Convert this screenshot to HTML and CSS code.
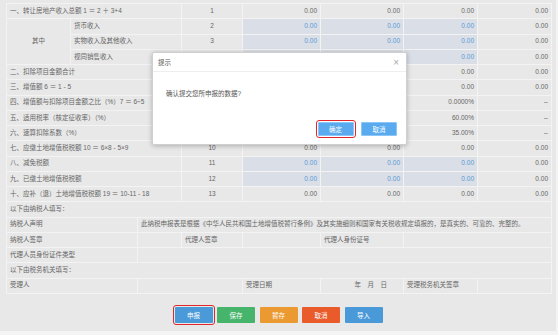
FILE: index.html
```html
<!DOCTYPE html>
<html lang="zh-CN">
<head>
    <meta charset="UTF-8">
    <title>土地增值税申报</title>
    <link rel="stylesheet" href="styles.css">
</head>
<body>
    <div class="page">
        <table class="form">
            <colgroup>
                <col class="c-a"><col class="c-b"><col class="c-c"><col class="c-d">
                <col class="c-e"><col class="c-f"><col class="c-g"><col class="c-h">
            </colgroup>
            <tr><td colspan="3">一、转让房地产收入总额 1 ＝ 2 ＋ 3+4</td><td class="no">1</td><td class="num">0.00</td><td class="num">0.00</td><td class="num">0.00</td><td class="num">0.00</td></tr>
            <tr><td rowspan="3" class="mid">其中</td><td colspan="2">货币收入</td><td class="no">2</td><td class="num in">0.00</td><td class="num in">0.00</td><td class="num in">0.00</td><td class="num">0.00</td></tr>
            <tr><td colspan="2">实物收入及其他收入</td><td class="no">3</td><td class="num in">0.00</td><td class="num in">0.00</td><td class="num in">0.00</td><td class="num">0.00</td></tr>
            <!-- rows under the dialog: hidden cells left empty -->
            <tr><td colspan="2">视同销售收入</td><td class="no"></td><td class="num in"></td><td class="num in"></td><td class="num in">0.00</td><td class="num">0.00</td></tr>
            <tr><td colspan="3">二、扣除项目金额合计</td><td class="no"></td><td class="num"></td><td class="num"></td><td class="num">0.00</td><td class="num">0.00</td></tr>
            <tr><td colspan="3">三、增值额 6 ＝ 1 - 5</td><td class="no"></td><td class="num"></td><td class="num"></td><td class="num">0.00</td><td class="num">0.00</td></tr>
            <tr><td colspan="3">四、增值额与扣除项目金额之比（%）7 ＝ 6÷5</td><td class="no"></td><td class="num"></td><td class="num"></td><td class="num">0.0000%</td><td class="num">--</td></tr>
            <tr><td colspan="3">五、适用税率（核定征收率）（%）</td><td class="no"></td><td class="num"></td><td class="num"></td><td class="num">60.00%</td><td class="num">--</td></tr>
            <tr><td colspan="3">六、速算扣除系数（%）</td><td class="no"></td><td class="num"></td><td class="num"></td><td class="num">35.00%</td><td class="num">--</td></tr>
            <tr><td colspan="3">七、应缴土地增值税税额 10 ＝ 6×8 - 5×9</td><td class="no">10</td><td class="num">0.00</td><td class="num">0.00</td><td class="num">0.00</td><td class="num">0.00</td></tr>
            <tr><td colspan="3">八、减免税额</td><td class="no">11</td><td class="num in">0.00</td><td class="num in">0.00</td><td class="num in">0.00</td><td class="num">0.00</td></tr>
            <tr><td colspan="3">九、已缴土地增值税税额</td><td class="no">12</td><td class="num in">0.00</td><td class="num in">0.00</td><td class="num in">0.00</td><td class="num">0.00</td></tr>
            <tr><td colspan="3">十、应补（退）土地增值税税额 19 ＝ 10-11 - 18</td><td class="no">13</td><td class="num">0.00</td><td class="num">0.00</td><td class="num">0.00</td><td class="num">0.00</td></tr>

            <tr><td colspan="8">以下由纳税人填写：</td></tr>
            <tr><td colspan="2">纳税人声明</td><td colspan="6">此纳税申报表是根据《中华人民共和国土地增值税暂行条例》及其实施细则和国家有关税收规定填报的，是真实的、可靠的、完整的。</td></tr>
            <tr><td colspan="2">纳税人签章</td><td></td><td>代理人签章</td><td></td><td>代理人身份证号</td><td colspan="2"></td></tr>
            <tr><td colspan="2">代理人员身份证件类型</td><td colspan="6"></td></tr>
            <tr><td colspan="8">以下由税务机关填写：</td></tr>
            <tr><td colspan="2">受理人</td><td colspan="2"></td><td>受理日期</td><td class="date">年　月　日</td><td>受理税务机关签章</td><td></td></tr>
        </table>

        <div class="actions">
            <button class="btn btn-blue marked">申报</button>
            <button class="btn btn-green">保存</button>
            <button class="btn btn-orange">暂存</button>
            <button class="btn btn-red">取消</button>
            <button class="btn btn-blue">导入</button>
        </div>

        <!-- 提示框 -->
        <div class="dialog">
            <div class="dialog-head">
                <span>提示</span>
                <span class="dialog-close">×</span>
            </div>
            <div class="dialog-body">确认提交您所申报的数据?</div>
            <div class="dialog-foot">
                <button class="dbtn marked">确定</button>
                <button class="dbtn">取消</button>
            </div>
        </div>
    </div>
</body>
</html>
```

FILE: styles.css
```css
body {
    margin: 0;
    background: #f4f4f4;
    font-family: "Liberation Sans", "Noto Sans CJK SC", sans-serif;
    font-size: 6.5px;
    color: #666;
}

.page {
    position: relative;
    width: 556px;
    height: 331px;
    box-sizing: border-box;
    padding: 3px 5px 0 6px;
    background: #e8e8e8;
}

.form {
    width: 545px;
    table-layout: fixed;
    border-collapse: collapse;
    border: 1px solid #f3f3f3;
}

.c-a { width: 64px; }
.c-b { width: 67px; }
.c-c { width: 44px; }
.c-d { width: 61px; }
.c-e { width: 78px; }
.c-f { width: 83px; }
.c-g { width: 74px; }
.c-h { width: 74px; }

.form tr {
    height: 15.25px;
}

.form td {
    border: 1px solid #f3f3f3;
    padding: 0 3px;
    line-height: 1;
    white-space: nowrap;
    overflow: hidden;
    vertical-align: middle;
}

.form .mid,
.form .no {
    text-align: center;
}

.form .num {
    text-align: right;
}

.form .in {
    background: #d9dee7;
    color: #5b9bd5;
}

.form .date {
    text-align: right;
    padding-right: 16px;
}

.actions {
    display: flex;
    justify-content: center;
    gap: 4.5px;
    margin-top: 13px;
}

.btn {
    width: 38px;
    height: 16px;
    border: none;
    border-radius: 1px;
    padding: 0;
    font-family: inherit;
    font-size: 6.5px;
    color: #fff;
}

.btn-blue { background: #4a9ad9; }
.btn-green { background: #47b46c; }
.btn-orange { background: #ea9a30; }
.btn-red { background: #e95b2b; }

.marked {
    outline: 1.6px solid #e3262b;
    outline-offset: 1px;
}

.dialog {
    position: absolute;
    left: 152px;
    top: 52px;
    width: 255px;
    height: 93px;
    box-sizing: border-box;
    background: #fff;
    border: 1px solid #cfcfcf;
    border-radius: 2px;
    box-shadow: 0 1px 5px rgba(0, 0, 0, 0.25);
    display: flex;
    flex-direction: column;
}

.dialog-head {
    height: 18px;
    display: flex;
    align-items: center;
    justify-content: space-between;
    padding: 0 7px 0 5px;
    border-bottom: 1px solid #eee;
    color: #555;
}

.dialog-close {
    font-size: 10px;
    color: #aaa;
}

.dialog-body {
    padding: 16px 0 0 13px;
    color: #555;
    flex: 1;
}

.dialog-foot {
    display: flex;
    justify-content: flex-end;
    gap: 7.5px;
    padding: 0 9px 8px 0;
}

.dbtn {
    width: 36px;
    height: 14px;
    padding: 0;
    border: 1px solid #8cc6f6;
    border-radius: 1px;
    background: #5aaaf0;
    color: #fff;
    font-family: inherit;
    font-size: 6.5px;
}
```
